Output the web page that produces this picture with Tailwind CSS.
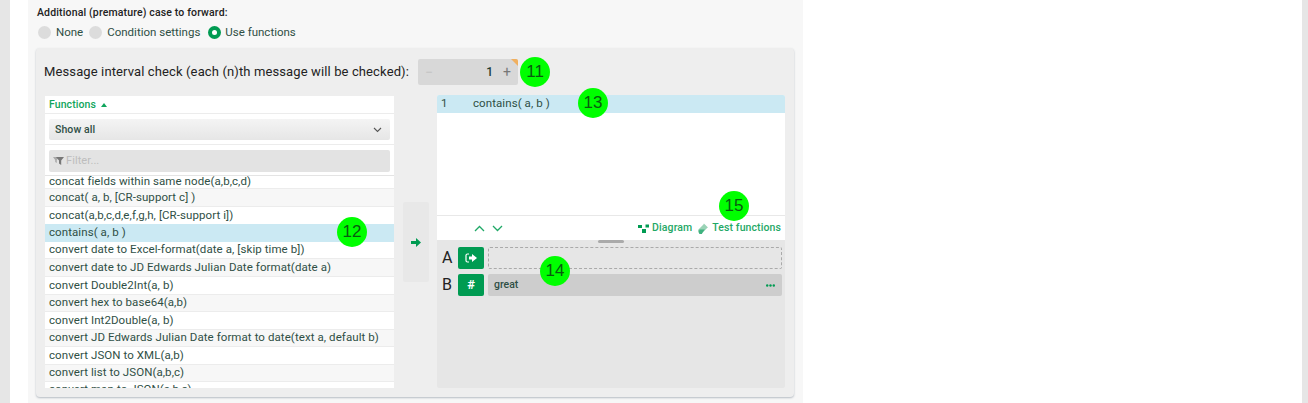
<!DOCTYPE html>
<html lang="en">
<head>
<meta charset="UTF-8">
<title>Functions</title>
<script src="https://cdn.jsdelivr.net/npm/@tailwindcss/browser@4"></script>
</head>
<body class="h-[403px] w-[1308px] overflow-hidden bg-white font-['Roboto',sans-serif] text-[#2f4f45]">
<div class="flex h-[403px] bg-[#e6e6e6] pl-[10px] pr-[6px]">
  <div class="flex-1 bg-white pl-[18px]">
    <!-- Main panel -->
    <div class="h-[403px] w-[775px] bg-[#f7f7f7] pl-[8px] pt-[6px]">
      <p class="pl-px text-[10.5px] leading-[14px] font-medium tracking-[0.15px] text-[#222]">Additional (premature) case to forward:</p>
      <div class="mt-[3px] flex h-[19px] items-center pl-[2px] text-[11.5px]">
        <span class="h-[13px] w-[13px] rounded-full bg-[#dcdcdc]"></span>
        <span class="ml-[5px]">None</span>
        <span class="ml-[6px] h-[13px] w-[13px] rounded-full bg-[#dcdcdc]"></span>
        <span class="ml-[5px]">Condition settings</span>
        <span class="ml-[8px] flex h-[13px] w-[13px] items-center justify-center rounded-full bg-[#009b52]"><span class="h-[5px] w-[5px] rounded-full bg-white"></span></span>
        <span class="ml-[4px]">Use functions</span>
      </div>
      <!-- Inner card -->
      <div class="relative mt-[6px] h-[349px] w-[758px] rounded-[4px] bg-[#eeeeee] px-[9px] shadow-[0_1px_2px_rgba(60,80,100,0.35)]">
        <div class="flex h-[48px] items-center">
          <span class="-ml-px text-[13px] tracking-[0.12px] text-[#222]">Message interval check (each (n)th message will be checked):</span>
          <div class="relative ml-[9px] flex h-[26px] w-[100px] items-center overflow-hidden rounded-[2px] bg-[#d8d8d8] pl-[7px] pr-[7px] text-[#888]">
            <span class="text-[14px] leading-none text-[#c4c4c4]">−</span>
            <span class="ml-auto text-[12px] font-medium text-[#1f3d34]">1</span>
            <span class="ml-[10px] text-[14px] leading-none text-[#777]">+</span>
            <span class="absolute right-0 top-0 h-0 w-0 border-l-[7px] border-t-[7px] border-l-transparent border-t-[#f0b060]"></span>
          </div>
          <span class="ml-[2px] flex h-[30px] w-[30px] items-center justify-center rounded-full bg-[#00ff00] font-['Liberation_Sans',sans-serif] text-[17px] text-[#0a5a10]">11</span>
        </div>

        <div class="flex">
          <!-- Function list -->
          <div class="flex h-[292px] w-[349px] flex-col overflow-hidden bg-white text-[11.5px] tracking-[0.08px]">
            <div class="flex h-[18px] shrink-0 items-center border-b border-[#ececec] pl-[4px] text-[10.5px] font-medium text-[#0fa55c]">Functions
              <svg class="ml-[5px]" width="6" height="4" viewBox="0 0 6 4"><path d="M0 4 3 0l3 4z" fill="#0fa55c"/></svg>
            </div>
            <div class="h-[31px] shrink-0 border-b border-[#ececec] px-[4px] pt-[5px]">
              <div class="flex h-[21px] items-center justify-between rounded-[2px] bg-gradient-to-b from-[#f4f4f4] to-[#e6e6e6] pl-[6px] pr-[8px] text-[10.5px] font-medium">Show all
                <svg width="9" height="6" viewBox="0 0 9 6" fill="none" stroke="#555" stroke-width="1.1"><path d="M1 1l3.5 3.5L8 1"/></svg>
              </div>
            </div>
            <div class="h-[31px] shrink-0 border-b border-[#e4e4e4] px-[4px] pt-[5px]">
              <div class="flex h-[22px] items-center rounded-[2px] bg-[#e3e3e3] pl-[4px] text-[11px] text-[#bdbdbd]">
                <svg width="11" height="8" viewBox="0 0 11 8"><path d="M0 0h6L3.8 3v3L2.2 5V3z" fill="#aaa"/><path d="M3 0h8L8.2 3.4V8L6 6.5V3.4z" fill="#777"/></svg>
                <span class="ml-[2px]">Filter...</span>
              </div>
            </div>
            <div class="flex h-[13px] shrink-0 items-end overflow-hidden border-b border-[#ececec] pl-[4px]"><span class="leading-[14px]">concat fields within same node(a,b,c,d)</span></div>
            <div class="flex h-[18px] shrink-0 items-center border-b border-[#ececec] bg-[#f7f7f7] pl-[4px]">concat( a, b, [CR-support c] )</div>
            <div class="flex h-[17px] shrink-0 items-center pl-[4px]">concat(a,b,c,d,e,f,g,h, [CR-support i])</div>
            <div class="flex h-[18px] shrink-0 items-center bg-[#cbe9f3] pl-[4px]">contains( a, b )</div>
            <div class="flex h-[17px] shrink-0 items-center border-b border-[#ececec] pl-[4px]">convert date to Excel-format(date a, [skip time b])</div>
            <div class="flex h-[18px] shrink-0 items-center border-b border-[#ececec] bg-[#f7f7f7] pl-[4px]">convert date to JD Edwards Julian Date format(date a)</div>
            <div class="flex h-[18px] shrink-0 items-center border-b border-[#ececec] pl-[4px]">convert Double2Int(a, b)</div>
            <div class="flex h-[17px] shrink-0 items-center border-b border-[#ececec] bg-[#f7f7f7] pl-[4px]">convert hex to base64(a,b)</div>
            <div class="flex h-[18px] shrink-0 items-center border-b border-[#ececec] pl-[4px]">convert Int2Double(a, b)</div>
            <div class="flex h-[17px] shrink-0 items-center border-b border-[#ececec] bg-[#f7f7f7] pl-[4px]">convert JD Edwards Julian Date format to date(text a, default b)</div>
            <div class="flex h-[18px] shrink-0 items-center border-b border-[#ececec] pl-[4px]">convert JSON to XML(a,b)</div>
            <div class="flex h-[17px] shrink-0 items-center border-b border-[#ececec] bg-[#f7f7f7] pl-[4px]">convert list to JSON(a,b,c)</div>
            <div class="h-[17px] shrink-0 pl-[4px] leading-[14px]">convert map to JSON(a,b,c)</div>
          </div>

          <!-- Add button -->
          <div class="ml-[9px] mt-[106px] flex h-[80px] w-[26px] items-center justify-center rounded-[2px] bg-[#e8e8e8]">
            <svg width="10" height="9" viewBox="0 0 10 9"><path d="M0 3h5V0l5 4.5L5 9V6H0z" fill="#009b52"/></svg>
          </div>

          <!-- Selected functions -->
          <div class="-mt-px ml-[8px] flex h-[293px] w-[348px] flex-col overflow-hidden rounded-[2px] bg-[#e6e6e6]">
            <div class="h-[120px] shrink-0 bg-white">
              <div class="flex h-[18px] items-center bg-[#cbe9f3] text-[11.5px] tracking-[0.08px]">
                <span class="w-[36px] pl-[4px]">1</span><span>contains( a, b )</span>
              </div>
            </div>
            <div class="flex h-[25px] shrink-0 items-center border-t border-[#e8e8e8] bg-white pr-[4px] text-[10.5px] font-medium tracking-[0.1px] text-[#1fa866]">
              <svg class="ml-[37px]" width="11" height="7" viewBox="0 0 11 7" fill="none" stroke="#1fa866" stroke-width="1.3"><path d="M1 6l4.500-4.500L10 6"/></svg>
              <svg class="ml-[7px]" width="11" height="7" viewBox="0 0 11 7" fill="none" stroke="#1fa866" stroke-width="1.3"><path d="M1 1l4.500 4.500L10 1"/></svg>
              <svg class="ml-auto mr-[3px]" width="11" height="9" viewBox="0 0 11 9" fill="#009b52"><rect y="1" width="4" height="3"/><rect x="7.500" y="0.500" width="3.500" height="3"/><rect x="4" y="5" width="4" height="4"/></svg>
              <span>Diagram</span>
              <svg class="ml-[6px] mr-[4px]" width="10" height="11" viewBox="0 0 11 11"><path d="M6.500 0l4.500 4.500-1 .5L5 10.200a1.900 1.900 0 0 1-4.200-4L6 1z" fill="#9ad3b6"/><path d="M1.500 6.500h6L5 10a1.800 1.800 0 0 1-4-.5z" fill="#3fb27f"/></svg>
              <span>Test functions</span>
            </div>
            <div class="relative flex-1 pl-[5px] pr-[3px] pt-[7px]">
              <span class="absolute left-[161px] top-0 h-[3px] w-[26px] rounded-full bg-[#aaaaaa]"></span>
              <div class="flex h-[22px] items-center">
                <span class="w-[16px] text-[16px] text-[#222]">A</span>
                <span class="flex h-[22px] w-[26px] items-center justify-center rounded-[2px] bg-[#009b52]">
                  <svg width="12" height="10" viewBox="0 0 12 10" fill="none"><path d="M4 1H2.500Q1 1 1 2.500v5Q1 9 2.500 9H4" stroke="#fff" stroke-width="1.200"/><path d="M4 3.500h3V1l5 4-5 4V6.500H4z" fill="#fff"/></svg>
                </span>
                <div class="ml-[4px] h-[22px] flex-1 rounded-[2px] border border-dashed border-[#aaaaaa]"></div>
              </div>
              <div class="mt-[5px] flex h-[22px] items-center">
                <span class="w-[16px] text-[16px] text-[#222]">B</span>
                <span class="flex h-[22px] w-[26px] items-center justify-center rounded-[2px] bg-[#009b52] text-[13px] font-bold text-white">#</span>
                <div class="ml-[4px] flex h-[22px] flex-1 items-center justify-between rounded-[2px] bg-[#cdcdcd] pl-[6px] pr-[7px] text-[10.5px] font-medium">great
                  <svg width="9" height="3" viewBox="0 0 9 3" fill="#009b52"><circle cx="1.200" cy="1.500" r="1.200"/><circle cx="4.500" cy="1.500" r="1.200"/><circle cx="7.800" cy="1.500" r="1.200"/></svg>
                </div>
              </div>
            </div>
          </div>
        </div>

        <!-- Annotation markers -->
        <span class="absolute left-[301px] top-[169px] flex h-[30px] w-[30px] items-center justify-center rounded-full bg-[#00ff00] font-['Liberation_Sans',sans-serif] text-[17px] text-[#0a5a10]">12</span>
        <span class="absolute left-[542px] top-[40px] flex h-[30px] w-[30px] items-center justify-center rounded-full bg-[#00ff00] font-['Liberation_Sans',sans-serif] text-[17px] text-[#0a5a10]">13</span>
        <span class="absolute left-[504px] top-[208px] flex h-[30px] w-[30px] items-center justify-center rounded-full bg-[#00ff00] font-['Liberation_Sans',sans-serif] text-[17px] text-[#0a5a10]">14</span>
        <span class="absolute left-[683px] top-[143px] flex h-[30px] w-[30px] items-center justify-center rounded-full bg-[#00ff00] font-['Liberation_Sans',sans-serif] text-[17px] text-[#0a5a10]">15</span>
      </div>
    </div>
  </div>
</div>
</body>
</html>
